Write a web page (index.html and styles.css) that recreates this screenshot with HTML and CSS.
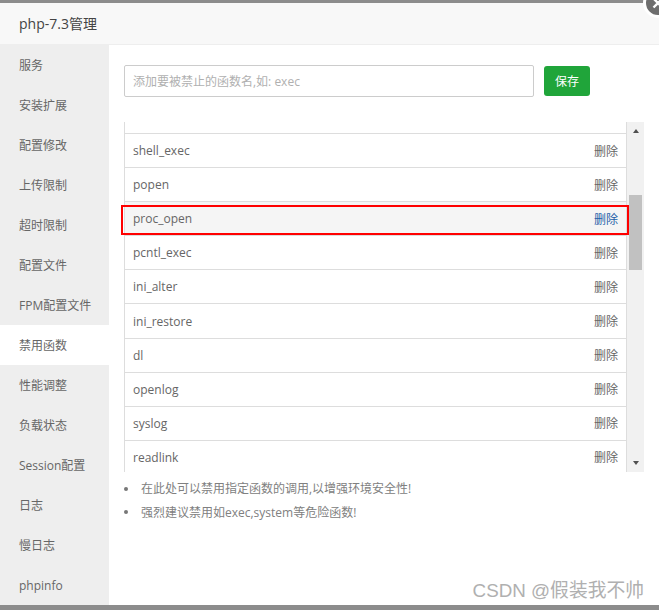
FILE: index.html
```html
<!DOCTYPE html>
<html lang="zh-CN">
  <head>
    <meta charset="UTF-8" />
    <title>php-7.3管理</title>
    <link rel="stylesheet" href="styles.css">
  </head>
  <body>
    <div class="layer">
      <div class="layer-title">php-7.3管理</div>
      <div class="layer-body">
        <div class="side-menu">
          <p>服务</p>
          <p>安装扩展</p>
          <p>配置修改</p>
          <p>上传限制</p>
          <p>超时限制</p>
          <p>配置文件</p>
          <p>FPM配置文件</p>
          <p class="active">禁用函数</p>
          <p>性能调整</p>
          <p>负载状态</p>
          <p>Session配置</p>
          <p>日志</p>
          <p>慢日志</p>
          <p>phpinfo</p>
        </div>
        <div class="content">
          <div class="add-form">
            <input class="fn-input" type="text" placeholder="添加要被禁止的函数名,如: exec" />
            <button class="save-btn">保存</button>
          </div>
          <div class="list-box">
            <div class="fn-list">
              <div class="spacer"></div>
              <div class="row"><span>shell_exec</span><a>删除</a></div>
              <div class="row"><span>popen</span><a>删除</a></div>
              <div class="row hover"><span>proc_open</span><a>删除</a></div>
              <div class="row"><span>pcntl_exec</span><a>删除</a></div>
              <div class="row"><span>ini_alter</span><a>删除</a></div>
              <div class="row"><span>ini_restore</span><a>删除</a></div>
              <div class="row"><span>dl</span><a>删除</a></div>
              <div class="row"><span>openlog</span><a>删除</a></div>
              <div class="row"><span>syslog</span><a>删除</a></div>
              <div class="row"><span>readlink</span><a>删除</a></div>
            </div>
            <div class="scrollbar">
              <div class="arrow-up"></div>
              <div class="thumb"></div>
              <div class="arrow-down"></div>
            </div>
          </div>
          <ul class="help">
            <li>在此处可以禁用指定函数的调用,以增强环境安全性!</li>
            <li>强烈建议禁用如exec,system等危险函数!</li>
          </ul>
        </div>
      </div>
    </div>
    <div class="close-btn">
      <svg width="20" height="20" viewBox="0 0 20 20">
        <path d="M5.5 5.5L14.5 14.5M14.5 5.5L5.5 14.5" stroke="#fff" stroke-width="2.4" fill="none" />
      </svg>
    </div>
    <div class="red-box"></div>
    <div class="watermark">CSDN @假装我不帅</div>
  </body>
</html>
```

FILE: styles.css
```css
* {
  box-sizing: border-box;
}

html,
body {
  height: 100%;
}

body {
  margin: 0;
  width: 659px;
  height: 610px;
  overflow: hidden;
  position: relative;
  font-family: "Open Sans", "Noto Sans CJK SC", sans-serif;
  font-size: 12px;
  color: #666;
  background-color: #8c8c8c;
  padding: 3px 0 5px;
}

.layer {
  height: 602px;
  background-color: #fff;
  display: flex;
  flex-direction: column;
}

.layer-title {
  height: 42px;
  flex-shrink: 0;
  padding-left: 19px;
  line-height: 42px;
  font-size: 14px;
  color: #444;
  background-color: #f8f8f8;
  border-bottom: 1px solid #eee;
}

.layer-body {
  flex: 1;
  display: flex;
  min-height: 0;
}

.side-menu {
  width: 109px;
  flex-shrink: 0;
  background-color: #eee;
}

.side-menu p {
  margin: 0;
  height: 40px;
  line-height: 41px;
  padding-left: 19px;
  color: #666;
}

.side-menu .active {
  background-color: #fff;
}

.content {
  flex: 1;
  padding: 20px 15px 0;
}

.add-form {
  display: flex;
  align-items: center;
  gap: 10px;
}

.fn-input {
  width: 410px;
  height: 32px;
  padding: 0 8px;
  border: 1px solid #ccc;
  border-radius: 2px;
  font-family: inherit;
  font-size: 12px;
}

.fn-input::placeholder {
  color: #b0b0b0;
}

.save-btn {
  width: 46px;
  height: 30px;
  padding: 0;
  border: none;
  border-radius: 3px;
  background-color: #20a53a;
  color: #fff;
  font-family: inherit;
  font-size: 12px;
}

.list-box {
  display: flex;
  width: 520px;
  height: 350px;
  margin-top: 25px;
}

.fn-list {
  width: 503px;
  overflow: hidden;
  border-left: 1px solid #ddd;
  border-right: 1px solid #ddd;
}

.spacer {
  height: 11px;
}

.row {
  display: flex;
  justify-content: space-between;
  align-items: center;
  height: 34.1px;
  padding: 0 8px;
  border-top: 1px solid #ddd;
}

.row a {
  color: #666;
}

.hover {
  background-color: #f5f5f5;
}

.hover a {
  color: #1f5fa8;
}

.scrollbar {
  width: 17px;
  position: relative;
  background-color: #f1f1f1;
}

.thumb {
  position: absolute;
  left: 2px;
  top: 73px;
  width: 13px;
  height: 75px;
  background-color: #c1c1c1;
}

.arrow-up,
.arrow-down {
  position: absolute;
  left: 6px;
  width: 0;
  height: 0;
  border-left: 3.5px solid transparent;
  border-right: 3.5px solid transparent;
}

.arrow-up {
  top: 7px;
  border-bottom: 4px solid #505050;
}

.arrow-down {
  bottom: 7px;
  border-top: 4px solid #505050;
}

.help {
  margin: 5px 0 0;
  padding: 0;
  list-style: none;
  color: #808080;
}

.help li {
  display: flex;
  align-items: center;
  gap: 13px;
  height: 23.5px;
  line-height: 23.5px;
}

.help li::before {
  content: "";
  width: 4px;
  height: 4px;
  border-radius: 50%;
  background-color: #777;
}

.close-btn {
  position: absolute;
  left: 643px;
  top: -12px;
  width: 30px;
  height: 30px;
  border: 3px solid #fff;
  border-radius: 50%;
  background-color: #6e6e6e;
  display: flex;
  align-items: center;
  justify-content: center;
}

.red-box {
  position: absolute;
  left: 121px;
  top: 205px;
  width: 508px;
  height: 30px;
  border: 2px solid #f00;
}

.watermark {
  position: absolute;
  right: 15px;
  top: 579px;
  font-size: 18.8px;
  line-height: 24px;
  color: #b0b0b0;
  font-family: "Liberation Sans", "Noto Sans CJK SC", sans-serif;
}
```
